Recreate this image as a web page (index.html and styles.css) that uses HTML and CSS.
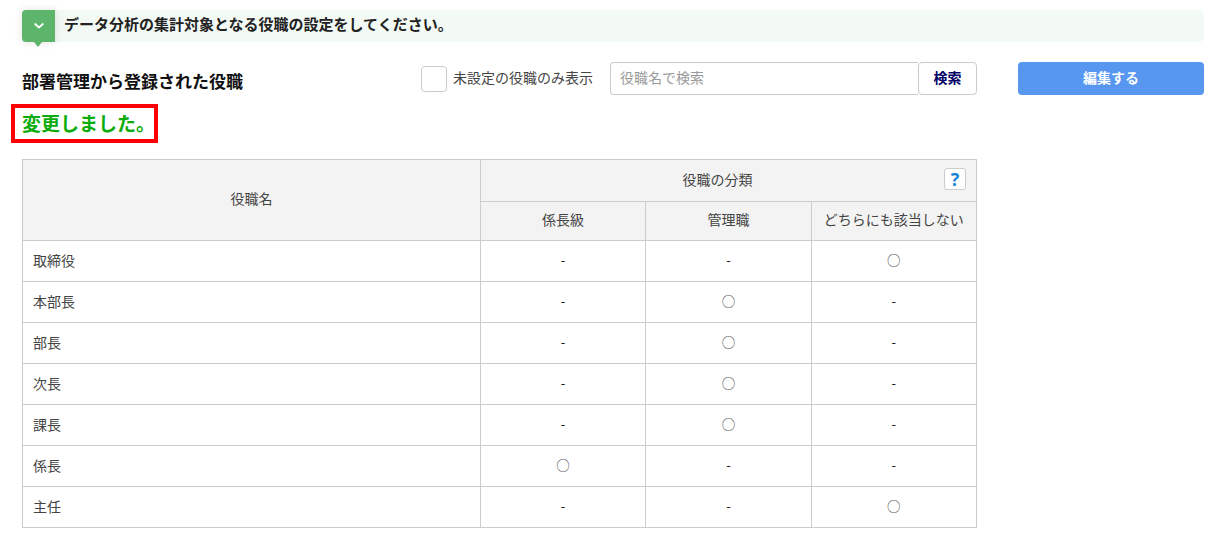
FILE: index.html
```html
<!DOCTYPE html>
<html lang="ja">
<head>
    <meta charset="UTF-8">
    <meta name="viewport" content="width=device-width, initial-scale=1.0">
    <title>役職の設定</title>
    <link rel="stylesheet" href="styles.css">
</head>
<body>
    <div class="guide">
        <button type="button" class="guide-toggle" aria-label="説明を開く">
            <svg width="12" height="8" viewBox="0 0 12 8" fill="none" stroke="#fff" stroke-width="1.8" stroke-linecap="round" stroke-linejoin="round">
                <path d="M2.2 2 L6 5.6 L9.8 2"/>
            </svg>
        </button>
        <p class="guide-text">データ分析の集計対象となる役職の設定をしてください。</p>
    </div>

    <div class="container">
        <main class="main">
            <div class="toolbar">
                <h1>部署管理から登録された役職</h1>
                <form class="search-form">
                    <input type="checkbox" id="unset-only">
                    <label for="unset-only">未設定の役職のみ表示</label>
                    <div class="search-group">
                        <input type="text" id="position-name" placeholder="役職名で検索" aria-label="役職名で検索">
                        <button type="submit" class="search-btn">検索</button>
                    </div>
                </form>
            </div>

            <p class="message">変更しました。</p>

            <table class="position-table">
                <thead>
                    <tr class="head-top">
                        <th rowspan="2" class="name-col">役職名</th>
                        <th colspan="3">
                            <div class="head-group">
                                <span>役職の分類</span>
                                <button type="button" class="help-btn" aria-label="ヘルプ">?</button>
                            </div>
                        </th>
                    </tr>
                    <tr class="head-sub">
                        <th>係長級</th>
                        <th>管理職</th>
                        <th>どちらにも該当しない</th>
                    </tr>
                </thead>
                <tbody>
                    <tr><td>取締役</td><td>-</td><td>-</td><td>◯</td></tr>
                    <tr><td>本部長</td><td>-</td><td>◯</td><td>-</td></tr>
                    <tr><td>部長</td><td>-</td><td>◯</td><td>-</td></tr>
                    <tr><td>次長</td><td>-</td><td>◯</td><td>-</td></tr>
                    <tr><td>課長</td><td>-</td><td>◯</td><td>-</td></tr>
                    <tr><td>係長</td><td>◯</td><td>-</td><td>-</td></tr>
                    <tr><td>主任</td><td>-</td><td>-</td><td>◯</td></tr>
                </tbody>
            </table>
        </main>
        <div class="side">
            <button type="button" class="edit-btn">編集する</button>
        </div>
    </div>
</body>
</html>
```
FILE: styles.css
```css
* {
    box-sizing: border-box;
}
body {
    margin: 0;
    padding: 10px 5px 16px 22px;
    background-color: #fff;
    color: #444;
    font-family: "Noto Sans CJK JP", sans-serif;
    font-size: 14px;
    line-height: 20px;
}
h1, p {
    margin: 0;
}
button, input {
    font-family: inherit;
    font-size: 14px;
}
button {
    padding: 0;
    cursor: pointer;
}

/* Guide bar */
.guide {
    display: flex;
    background-color: #f3faf5;
    border-radius: 5px;
}
.guide-toggle {
    position: relative;
    display: flex;
    align-items: center;
    justify-content: center;
    width: 33px;
    height: 32px;
    border: none;
    border-radius: 4px 0 0 4px;
    background-color: #5cb56b;
    box-shadow: 0 0 8px rgba(0, 0, 0, 0.12);
}
.guide-toggle::after {
    content: "";
    position: absolute;
    top: 100%;
    left: 12px;
    border: 4px solid transparent;
    border-top: 5px solid #5cb56b;
    border-bottom: none;
}
.guide-text {
    padding: 4px 9px;
    color: #222;
    font-size: 15px;
    font-weight: bold;
}

.container {
    display: flex;
    gap: 41px;
    margin-top: 20px;
}
.main {
    flex: 1;
}
.side {
    width: 186px;
}

/* Heading and search */
.toolbar {
    display: flex;
    justify-content: space-between;
    align-items: center;
}
h1 {
    padding-top: 4px;
    color: #111;
    font-size: 17px;
    line-height: 24px;
}
.search-form {
    display: flex;
    align-items: center;
}
.search-form label {
    padding-bottom: 4px;
    margin: 0 17px 0 6px;
}
input[type="checkbox"] {
    appearance: none;
    width: 26px;
    height: 26px;
    margin: 0;
    border: 1px solid #ccc;
    border-radius: 4px;
    background-color: #fff;
}
.search-group {
    display: flex;
}
input[type="text"] {
    width: 308px;
    height: 33px;
    padding: 0 9px 4px;
    border: 1px solid #ccc;
    border-right: none;
    border-radius: 4px 0 0 4px;
}
input[type="text"]::placeholder {
    color: #999;
}
.search-btn,
.edit-btn {
    height: 33px;
    padding-bottom: 4px;
    border-radius: 4px;
    font-weight: bold;
}
.search-btn {
    width: 59px;
    border: 1px solid #ccc;
    background-color: #fff;
    color: #000066;
}
.edit-btn {
    width: 100%;
    border: none;
    background-color: #5897f0;
    color: #fff;
}

/* Update message */
.message {
    position: relative;
    width: fit-content;
    margin-top: 16px;
    color: #0cac0c;
    font-size: 19px;
    font-weight: bold;
    line-height: 24px;
}
.message::after {
    content: "";
    position: absolute;
    inset: -7px -3px -8px -11px;
    border: 4px solid #f00;
}

/* Position table */
.position-table {
    width: 100%;
    margin-top: 24px;
    border-collapse: collapse;
    table-layout: fixed;
}
.position-table th,
.position-table td {
    padding: 0 0 2px;
    border: 1px solid #ccc;
    text-align: center;
}
.position-table th {
    padding-bottom: 4px;
    background-color: #f3f3f3;
    font-weight: normal;
}
.position-table td {
    height: 41px;
    color: #111;
    font-size: 13px;
}
.position-table td:first-child {
    padding-left: 10px;
    color: #444;
    font-size: 14px;
    text-align: left;
}
.name-col {
    width: 48%;
}
.head-top {
    height: 42px;
}
.head-sub {
    height: 39px;
}
.head-group {
    display: grid;
    grid-template-columns: 1fr 22px;
    align-items: center;
    padding: 0 10px;
}
.help-btn {
    height: 22px;
    border: 1px solid #ccc;
    border-radius: 3px;
    background-color: #fff;
    color: #1583d6;
    font-family: "Open Sans", sans-serif;
    font-size: 18px;
    font-weight: bold;
    line-height: 20px;
}
```
